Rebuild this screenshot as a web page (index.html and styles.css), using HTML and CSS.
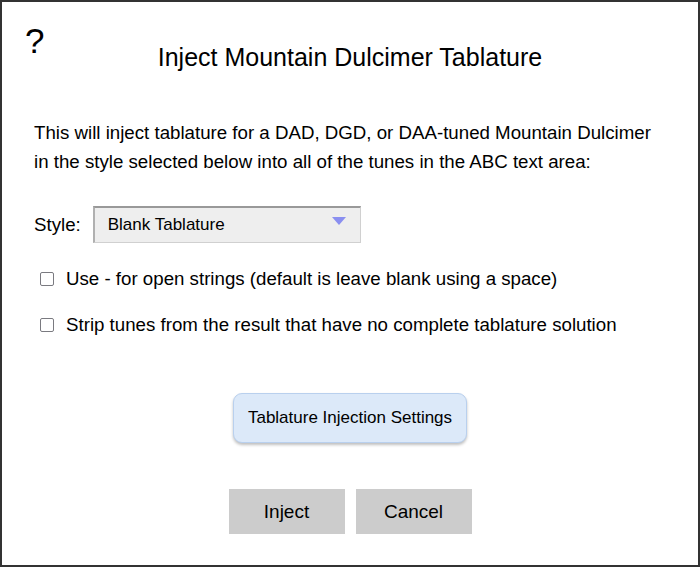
FILE: index.html
```html
<!DOCTYPE html>
<html>
<head>
<meta charset="utf-8">
<link rel="stylesheet" href="styles.css">
</head>
<body>
<div class="dialog">
  <div class="help">?</div>
  <h1 class="title">Inject Mountain Dulcimer Tablature</h1>
  <p class="intro">This will inject tablature for a DAD, DGD, or DAA-tuned Mountain Dulcimer<br>in the style selected below into all of the tunes in the ABC text area:</p>
  <div class="style-row">
    <span class="label">Style:</span>
    <div class="select">
      <span>Blank Tablature</span>
      <svg class="arrow" width="14" height="8" viewBox="0 0 14 8"><path d="M0 0 H14 L7 8 Z" fill="#8a8ff0"/></svg>
    </div>
  </div>
  <label class="check-row"><span class="box"></span><span>Use - for open strings (default is leave blank using a space)</span></label>
  <label class="check-row"><span class="box"></span><span>Strip tunes from the result that have no complete tablature solution</span></label>
  <div class="settings-wrap"><button class="settings">Tablature Injection Settings</button></div>
  <div class="actions">
    <button class="btn">Inject</button>
    <button class="btn">Cancel</button>
  </div>
</div>
</body>
</html>
```
FILE: styles.css
```css
html, body {
  margin: 0;
  padding: 0;
  background: #fff;
}
body {
  font-family: "Liberation Sans", Arial, sans-serif;
  color: #000;
}
.dialog {
  position: relative;
  box-sizing: border-box;
  width: 700px;
  height: 567px;
  border: 2px solid #333;
  padding: 0 32px;
}
.help {
  position: absolute;
  left: 23px;
  top: 19px;
  font-size: 35px;
  line-height: 40px;
}
.title {
  margin: 0;
  padding-top: 40px;
  text-align: center;
  font-size: 25px;
  font-weight: normal;
  line-height: 30px;
}
.intro {
  margin: 46px 0 0;
  font-size: 18.7px;
  line-height: 29px;
}
.style-row {
  display: flex;
  align-items: center;
  gap: 12px;
  margin-top: 30px;
  font-size: 18.7px;
}
.select {
  box-sizing: border-box;
  width: 268px;
  height: 37px;
  display: flex;
  align-items: center;
  justify-content: space-between;
  padding: 0 14px 0 13px;
  background: #eeeeee;
  border: 1px solid #d0d0d0;
  border-top: 2px solid #999999;
  border-left: 2px solid #b0b0b0;
  font-size: 17px;
}
.arrow {
  margin-top: -8px;
}
.check-row {
  display: flex;
  align-items: center;
  gap: 12px;
  margin-top: 23px;
  padding-left: 6px;
  font-size: 18.7px;
  line-height: 26px;
}
.check-row + .check-row {
  margin-top: 20px;
}
.box {
  box-sizing: border-box;
  width: 14px;
  height: 14px;
  border: 1.5px solid #7a7a80;
  border-radius: 2px;
  background: #fff;
}
.settings-wrap {
  display: flex;
  justify-content: center;
  margin-top: 55px;
}
.settings {
  box-sizing: border-box;
  width: 234px;
  height: 50px;
  background: #dce9f9;
  border: 1px solid #b9d0ee;
  border-radius: 9px;
  box-shadow: 0 2px 3px rgba(0,0,0,0.25);
  font-family: "Liberation Sans", Arial, sans-serif;
  font-size: 17px;
  color: #000;
}
.actions {
  display: flex;
  justify-content: center;
  gap: 11px;
  margin-top: 46px;
}
.btn {
  box-sizing: border-box;
  width: 116px;
  height: 45px;
  background: #cccccc;
  border: none;
  font-family: "Liberation Sans", Arial, sans-serif;
  font-size: 19px;
  color: #000;
}
```
